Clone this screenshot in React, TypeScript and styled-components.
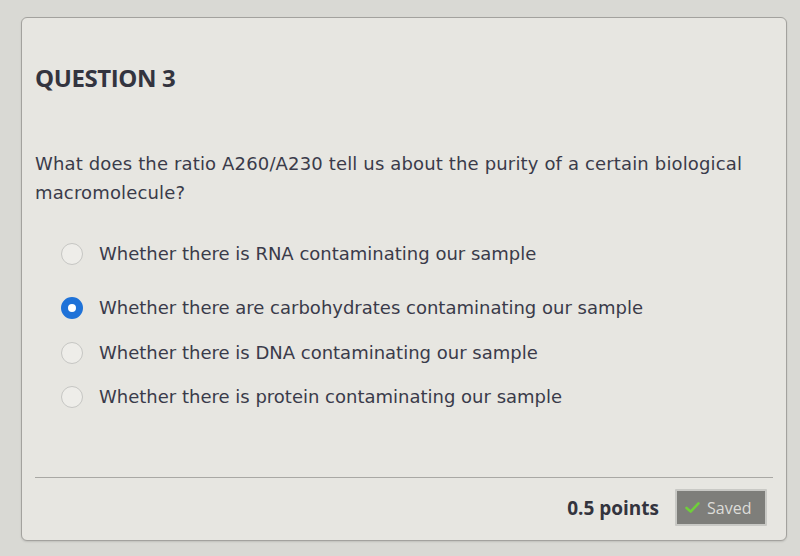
import React from "react";
import styled, { createGlobalStyle } from "styled-components";

const GlobalStyle = createGlobalStyle`
  html, body {
    margin: 0;
    padding: 0;
    background: #d9d9d4;
  }
  body {
    width: 800px;
    height: 556px;
    overflow: hidden;
  }
`;

const options = [
  { id: "a", label: "Whether there is RNA contaminating our sample", gap: 0 },
  { id: "b", label: "Whether there are carbohydrates contaminating our sample", gap: 22 },
  { id: "c", label: "Whether there is DNA contaminating our sample", gap: 13 },
  { id: "d", label: "Whether there is protein contaminating our sample", gap: 12 },
];

export default function App() {
  const selected = "b";

  return (
    <>
      <GlobalStyle />
      <Page>
        <Card>
          <Title>QUESTION 3</Title>
          <Prompt>
            What does the ratio A260/A230 tell us about the purity of a certain
            biological macromolecule?
          </Prompt>
          <Options>
            {options.map((o) => (
              <Option key={o.id} $gap={o.gap}>
                <Radio $checked={o.id === selected} />
                <span>{o.label}</span>
              </Option>
            ))}
          </Options>
          <Footer>
            <Points>0.5 points</Points>
            <SavedButton>
              <CheckIcon viewBox="0 0 16 12">
                <path
                  d="M1.5 6.5 L6 10.5 L14.5 1.5"
                  fill="none"
                  stroke="#6fcf3a"
                  strokeWidth="2.8"
                  strokeLinecap="round"
                  strokeLinejoin="round"
                />
              </CheckIcon>
              Saved
            </SavedButton>
          </Footer>
        </Card>
      </Page>
    </>
  );
}

const Page = styled.div`
  padding: 17px 13px 15px 21px;
`;

const Card = styled.section`
  height: 524px;
  box-sizing: border-box;
  display: flex;
  flex-direction: column;
  background: #e7e6e1;
  border: 1px solid #a3a29e;
  border-radius: 6px;
  box-shadow: 0 1px 2px rgba(0, 0, 0, 0.12);
  padding: 0 13px 0 13px;
  color: #3a3b4a;
`;

const Title = styled.h2`
  margin: 46px 0 0 0;
  font-family: "Open Sans", sans-serif;
  font-weight: 700;
  font-size: 24px;
  line-height: 28px;
  letter-spacing: -0.4px;
  color: #33343f;
`;

const Prompt = styled.p`
  margin: 57px 0 0 0;
  font-family: "DejaVu Sans", Verdana, sans-serif;
  font-size: 18px;
  line-height: 29px;
  letter-spacing: 0.15px;
`;

const Options = styled.div`
  display: flex;
  flex-direction: column;
  margin-top: 31px;
  padding-left: 26px;
`;

const Option = styled.label<{ $gap: number }>`
  display: flex;
  align-items: center;
  gap: 16px;
  margin-top: ${(p) => p.$gap}px;
  font-family: "DejaVu Sans", Verdana, sans-serif;
  font-size: 18px;
  line-height: 32px;
`;

const Radio = styled.span<{ $checked: boolean }>`
  width: 22px;
  height: 22px;
  box-sizing: border-box;
  border-radius: 50%;
  flex: none;
  background: ${(p) => (p.$checked ? "#fff" : "#eeede9")};
  border: ${(p) => (p.$checked ? "7.5px solid #1f72d8" : "1.5px solid #c6c6c3")};
`;

const Footer = styled.div`
  margin-top: auto;
  margin-bottom: 14px;
  border-top: 1px solid #a9a8a4;
  padding-top: 11px;
  display: flex;
  justify-content: flex-end;
  align-items: center;
  gap: 16px;
  padding-right: 6px;
`;

const Points = styled.span`
  font-family: "Open Sans", sans-serif;
  font-weight: 700;
  font-size: 19px;
  color: #33343e;
`;

const SavedButton = styled.button`
  display: flex;
  align-items: center;
  gap: 7px;
  height: 37px;
  padding: 0 16px 0 8px;
  width: 92px;
  box-sizing: border-box;
  background: #7e7e7a;
  border: 2px solid #c9c9c5;
  border-radius: 1px;
  font-family: "Open Sans", sans-serif;
  font-size: 16px;
  color: #dcdcd8;
`;

const CheckIcon = styled.svg`
  width: 15px;
  height: 11px;
  flex: none;
`;
